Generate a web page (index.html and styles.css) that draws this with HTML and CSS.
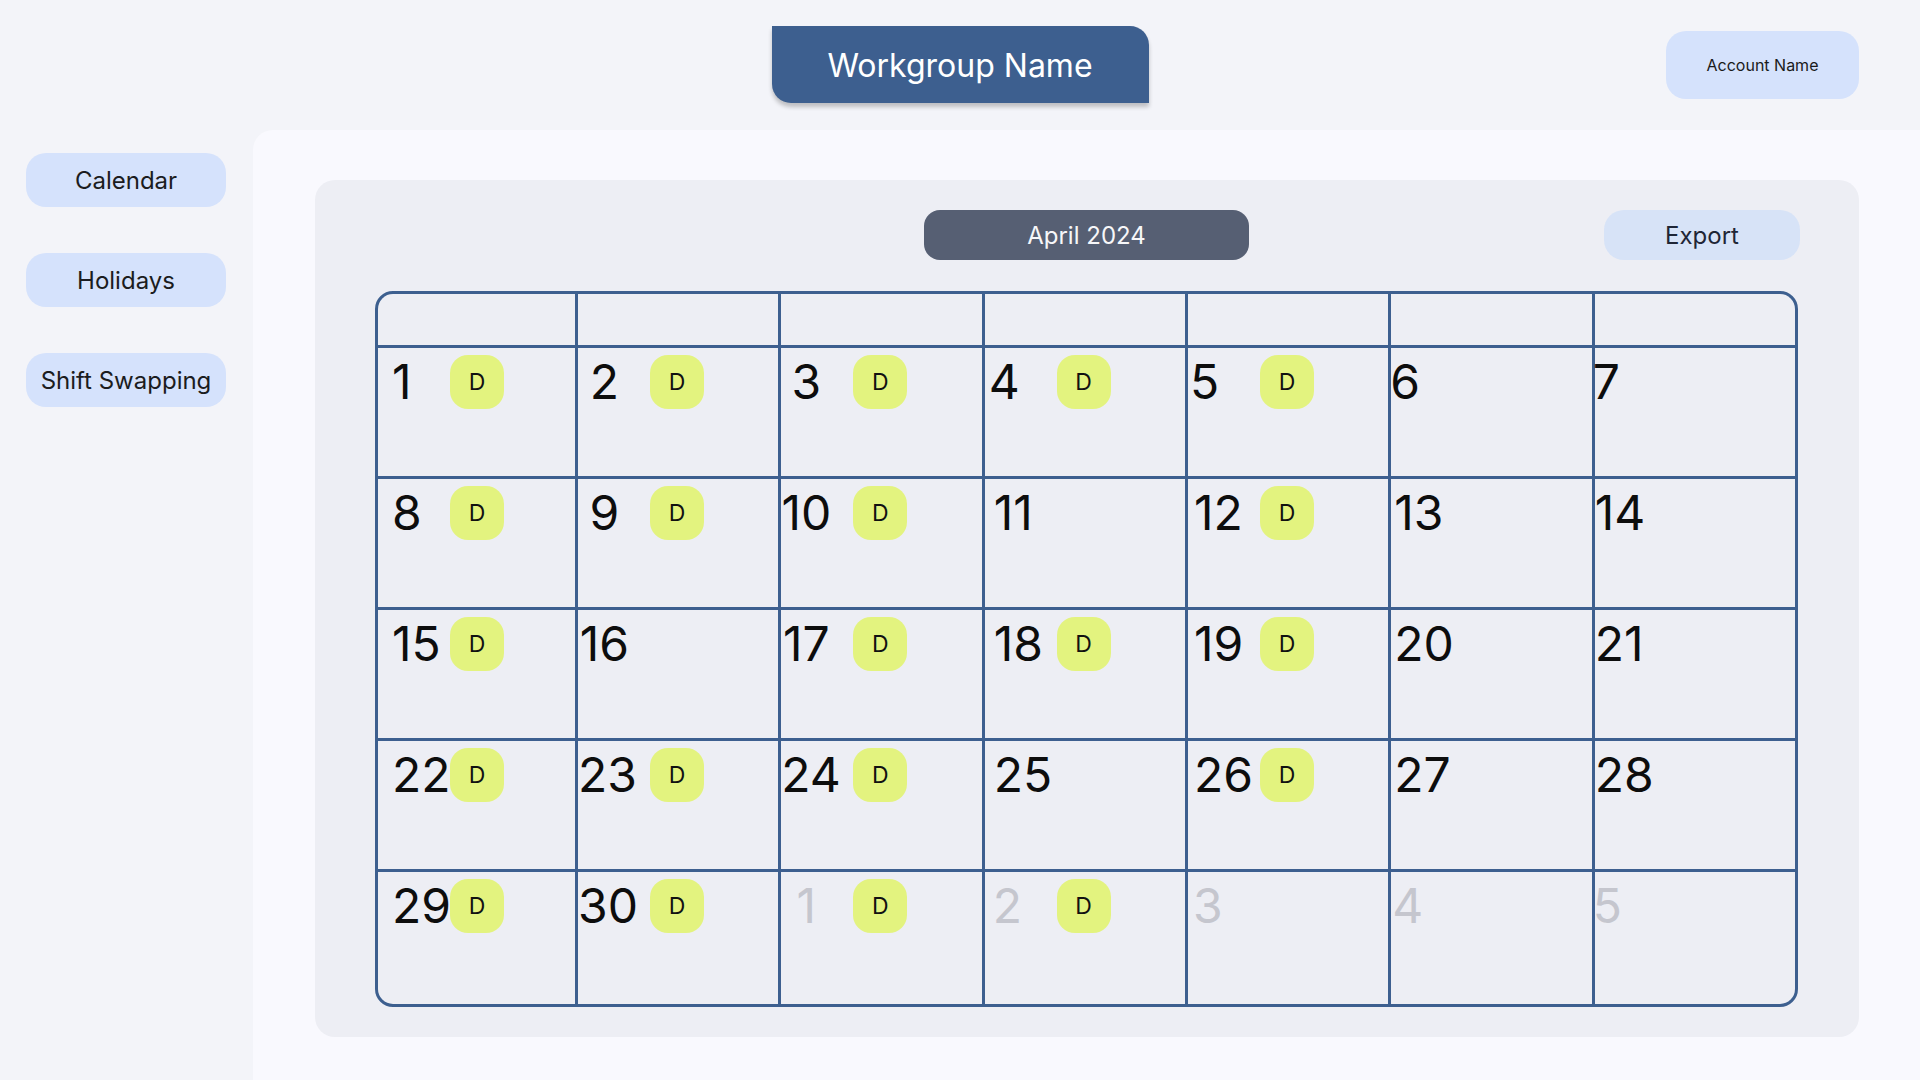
FILE: index.html
```html
<!DOCTYPE html>
<html lang="en">
<head>
<meta charset="utf-8">
<title>Workgroup Calendar</title>
<link rel="stylesheet" href="styles.css">
</head>
<body>
<div class="app">
  <header class="topbar">
    <div class="spacer"></div>
    <div class="workgroup">Workgroup Name</div>
    <div class="account">Account Name</div>
  </header>
  <div class="layout">
    <nav class="sidebar">
      <div class="nav-btn">Calendar</div>
      <div class="nav-btn">Holidays</div>
      <div class="nav-btn">Shift Swapping</div>
    </nav>
    <main class="main">
      <section class="cal-panel">
        <div class="toolbar">
          <div class="spacer"></div>
          <div class="month">April 2024</div>
          <div class="export">Export</div>
        </div>
        <div class="cal-grid">
          <div class="head"></div><div class="head"></div><div class="head"></div><div class="head"></div><div class="head"></div><div class="head"></div><div class="head"></div>

          <div class="day"><span class="num">1</span><span class="badge">D</span></div>
          <div class="day"><span class="num">2</span><span class="badge">D</span></div>
          <div class="day"><span class="num">3</span><span class="badge">D</span></div>
          <div class="day"><span class="num">4</span><span class="badge">D</span></div>
          <div class="day"><span class="num">5</span><span class="badge">D</span></div>
          <div class="day"><span class="num">6</span></div>
          <div class="day"><span class="num">7</span></div>

          <div class="day"><span class="num">8</span><span class="badge">D</span></div>
          <div class="day"><span class="num">9</span><span class="badge">D</span></div>
          <div class="day"><span class="num dd">10</span><span class="badge">D</span></div>
          <div class="day"><span class="num dd">11</span></div>
          <div class="day"><span class="num dd">12</span><span class="badge">D</span></div>
          <div class="day"><span class="num dd">13</span></div>
          <div class="day"><span class="num dd">14</span></div>

          <div class="day"><span class="num dd">15</span><span class="badge">D</span></div>
          <div class="day"><span class="num dd">16</span></div>
          <div class="day"><span class="num dd">17</span><span class="badge">D</span></div>
          <div class="day"><span class="num dd">18</span><span class="badge">D</span></div>
          <div class="day"><span class="num dd">19</span><span class="badge">D</span></div>
          <div class="day"><span class="num dd">20</span></div>
          <div class="day"><span class="num dd">21</span></div>

          <div class="day"><span class="num dd">22</span><span class="badge">D</span></div>
          <div class="day"><span class="num dd">23</span><span class="badge">D</span></div>
          <div class="day"><span class="num dd">24</span><span class="badge">D</span></div>
          <div class="day"><span class="num dd">25</span></div>
          <div class="day"><span class="num dd">26</span><span class="badge">D</span></div>
          <div class="day"><span class="num dd">27</span></div>
          <div class="day"><span class="num dd">28</span></div>

          <div class="day"><span class="num dd">29</span><span class="badge">D</span></div>
          <div class="day"><span class="num dd">30</span><span class="badge">D</span></div>
          <div class="day muted"><span class="num">1</span><span class="badge">D</span></div>
          <div class="day muted"><span class="num">2</span><span class="badge">D</span></div>
          <div class="day muted"><span class="num">3</span></div>
          <div class="day muted"><span class="num">4</span></div>
          <div class="day muted"><span class="num">5</span></div>
        </div>
      </section>
    </main>
  </div>
</div>
</body>
</html>
```

FILE: styles.css
```css
* { box-sizing: border-box; }

html, body {
  margin: 0;
  padding: 0;
}

body {
  background: #f3f4f9;
  font-family: Inter, "Noto Sans", "Liberation Sans", sans-serif;
  color: #141414;
  width: 1920px;
  height: 1080px;
  overflow: hidden;
}

.app {
  display: flex;
  flex-direction: column;
  height: 1080px;
}

/* ---------- top bar ---------- */
.topbar {
  height: 130px;
  flex-shrink: 0;
  display: grid;
  grid-template-columns: 1fr auto 1fr;
  align-items: start;
}

.workgroup {
  margin-top: 26px;
  width: 377px;
  height: 77px;
  padding-top: 2px;
  background: #3d5f8f;
  color: #ffffff;
  font-size: 32px;
  display: flex;
  align-items: center;
  justify-content: center;
  border-radius: 0 19px 0 19px;
  box-shadow: 0 4px 4px rgba(0, 0, 0, 0.22);
}

.account {
  justify-self: end;
  margin-top: 31px;
  margin-right: 61px;
  width: 193px;
  height: 68px;
  background: #d5e2fc;
  border-radius: 20px;
  display: flex;
  align-items: center;
  justify-content: center;
  font-size: 16px;
  color: #1a1a1a;
}

/* ---------- layout ---------- */
.layout {
  flex: 1;
  display: grid;
  grid-template-columns: 253px 1fr;
  min-height: 0;
}

.sidebar {
  display: flex;
  flex-direction: column;
  gap: 46px;
  padding: 23px 0 0 26px;
}

.nav-btn {
  width: 200px;
  height: 54px;
  background: #d5e2fc;
  border-radius: 20px;
  display: flex;
  align-items: center;
  justify-content: center;
  font-size: 24px;
  color: #1b1c20;
}

.main {
  background: #f9f9fe;
  border-top-left-radius: 20px;
  padding: 50px 61px 44px 62px;
}

.cal-panel {
  background: #edeef4;
  border-radius: 20px;
  padding: 30px 61px 30px 60px;
  display: flex;
  flex-direction: column;
  gap: 31px;
}

/* ---------- toolbar ---------- */
.toolbar {
  display: grid;
  grid-template-columns: 1fr auto 1fr;
  align-items: center;
}

.month {
  width: 325px;
  height: 50px;
  background: #565f73;
  color: #f7f7f9;
  border-radius: 16px;
  display: flex;
  align-items: center;
  justify-content: center;
  font-size: 24px;
}

.export {
  justify-self: end;
  width: 196px;
  height: 50px;
  margin-right: -2px;
  background: #d7e3f7;
  color: #1f2636;
  border-radius: 20px;
  display: flex;
  align-items: center;
  justify-content: center;
  font-size: 24px;
}

/* ---------- calendar grid ---------- */
.cal-grid {
  display: grid;
  grid-template-columns: 197px repeat(6, 1fr);
  grid-template-rows: 51px repeat(4, 128px) 132px;
  gap: 3px;
  background: #3d5f8f;
  border: 3px solid #3d5f8f;
  border-radius: 18px;
  overflow: hidden;
}

.head,
.day {
  background: #edeef4;
}

.day {
  display: flex;
  align-items: flex-start;
  padding-top: 7px;
}

.num {
  flex-shrink: 0;
  width: 72px;
  font-size: 48px;
  line-height: 54px;
  color: #0d0d0d;
  white-space: nowrap;
}

.day.muted .num {
  color: #c5c6ce;
}

.badge {
  flex-shrink: 0;
  width: 54px;
  height: 54px;
  border-radius: 18px;
  background: #e3f37f;
  color: #111111;
  font-size: 23px;
  display: flex;
  align-items: center;
  justify-content: center;
}

/* per-column number placement, as in the mockup */
.day:nth-child(7n+1) .num { text-indent: 14px; }
.day:nth-child(7n+2) .num { text-align: center; padding-right: 19px; }
.day:nth-child(7n+3) .num { text-align: center; padding-right: 22px; }
.day:nth-child(7n+4) .num { text-indent: 4px; }
.day:nth-child(7n+4) .num.dd { text-indent: 9px; }
.day:nth-child(7n+5) .num { text-indent: 2px; }
.day:nth-child(7n+5) .num.dd { text-indent: 6px; }
.day:nth-child(7n+6) .num { text-indent: -1px; }
.day:nth-child(7n+6) .num.dd { text-indent: 3px; }
.day:nth-child(7n+7) .num { text-indent: -2px; }
.day:nth-child(7n+7) .num.dd { text-indent: 0; }

.day.muted:nth-child(7n+4) .num { text-indent: 8px; }
.day.muted:nth-child(7n+5) .num { text-indent: 5px; }
.day.muted:nth-child(7n+6) .num { text-indent: 1px; }
```
